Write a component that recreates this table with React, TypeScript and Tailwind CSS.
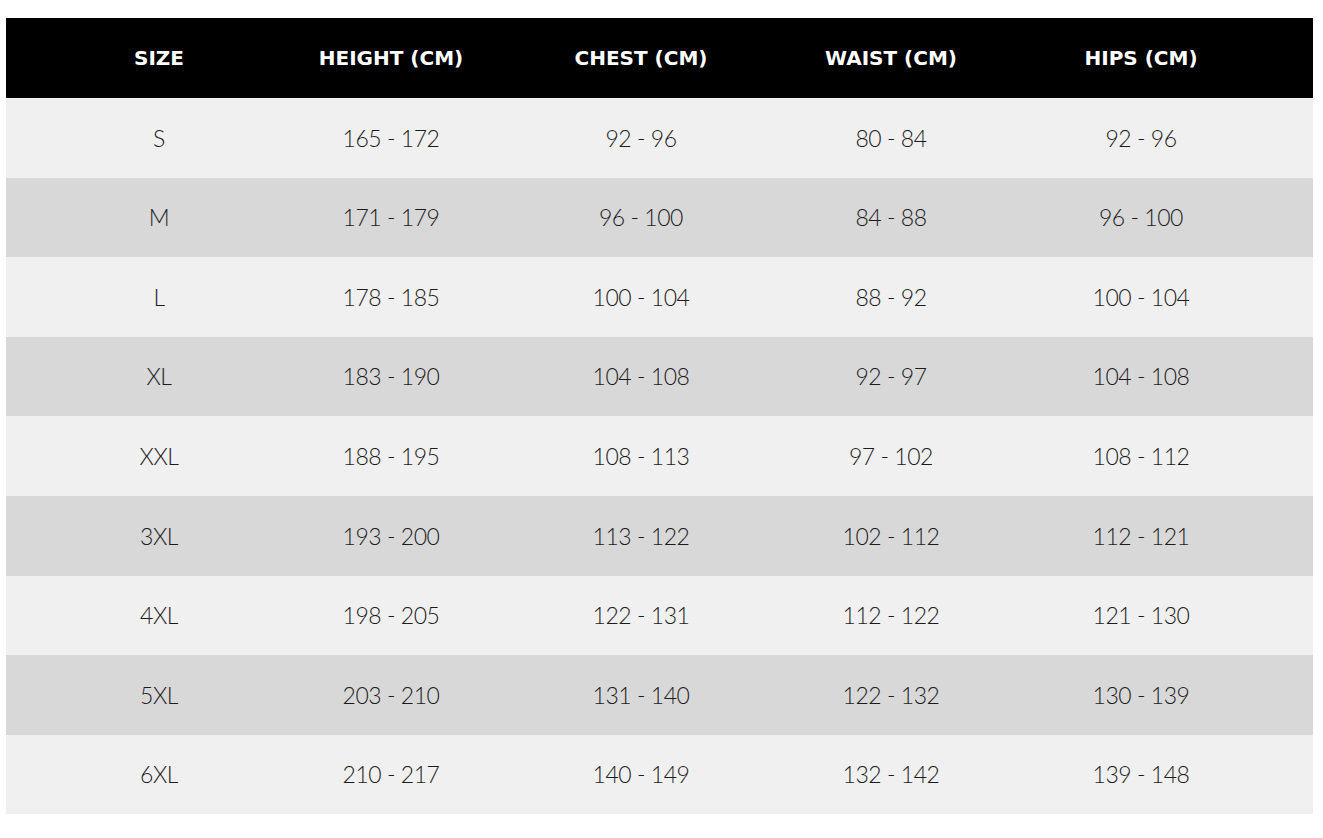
const headers = ["SIZE", "HEIGHT (CM)", "CHEST (CM)", "WAIST (CM)", "HIPS (CM)"];

const rows: string[][] = [
	["S", "165 - 172", "92 - 96", "80 - 84", "92 - 96"],
	["M", "171 - 179", "96 - 100", "84 - 88", "96 - 100"],
	["L", "178 - 185", "100 - 104", "88 - 92", "100 - 104"],
	["XL", "183 - 190", "104 - 108", "92 - 97", "104 - 108"],
	["XXL", "188 - 195", "108 - 113", "97 - 102", "108 - 112"],
	["3XL", "193 - 200", "113 - 122", "102 - 112", "112 - 121"],
	["4XL", "198 - 205", "122 - 131", "112 - 122", "121 - 130"],
	["5XL", "203 - 210", "131 - 140", "122 - 132", "130 - 139"],
	["6XL", "210 - 217", "140 - 149", "132 - 142", "139 - 148"],
];

const grid = "grid grid-cols-[214px_250px_250px_250px_250px] pl-[46px] pr-[47px]";

export default function App() {
	return (
		<div className="min-h-screen bg-white pt-[18px] pl-[6px]">
			<div className="w-[1307px]">
				<div
					className={`${grid} h-[80px] items-center bg-black font-['DejaVu_Sans',sans-serif] text-[20px] font-bold text-white`}
				>
					{headers.map((h) => (
						<div key={h} className="text-center">
							{h}
						</div>
					))}
				</div>
				{rows.map((row, i) => (
					<div
						key={row[0]}
						className={`${grid} h-[79.6px] items-center font-['Lato',sans-serif] text-[23px] font-light tracking-[-0.02em] text-[#1c1c1c] ${
							i % 2 === 0 ? "bg-[#f0f0f0]" : "bg-[#d8d8d8]"
						}`}
					>
						{row.map((cell, j) => (
							<div key={j} className="text-center">
								{cell}
							</div>
						))}
					</div>
				))}
			</div>
		</div>
	);
}
